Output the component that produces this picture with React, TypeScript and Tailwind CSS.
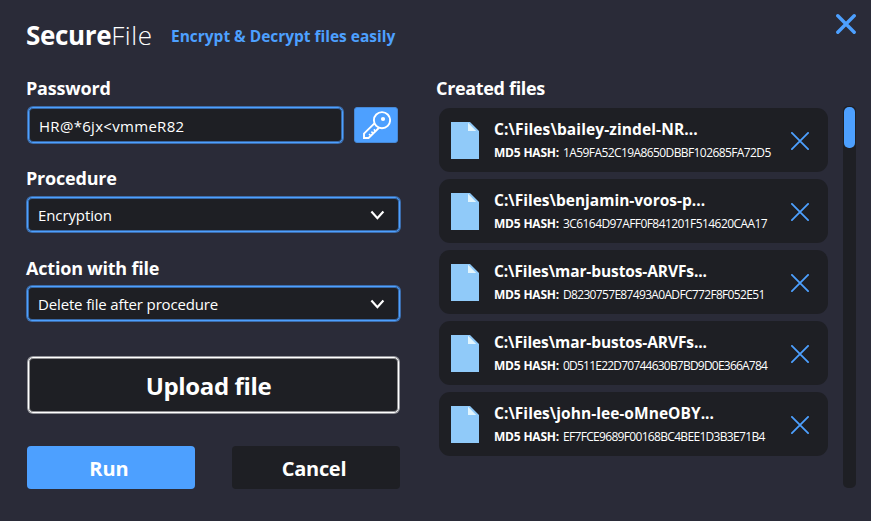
const files = [
  { name: "C:\\Files\\bailey-zindel-NR...", hash: "1A59FA52C19A8650DBBF102685FA72D5", nameTracking: "tracking-[0.11px]", hashTracking: "tracking-[-0.59px]" },
  { name: "C:\\Files\\benjamin-voros-p...", hash: "3C6164D97AFF0F841201F514620CAA17", nameTracking: "tracking-[0px]", hashTracking: "tracking-[-0.57px]" },
  { name: "C:\\Files\\mar-bustos-ARVFs...", hash: "D8230757E87493A0ADFC772F8F052E51", nameTracking: "tracking-[-0.1px]", hashTracking: "tracking-[-0.67px]" },
  { name: "C:\\Files\\mar-bustos-ARVFs...", hash: "0D511E22D70744630B7BD9D0E366A784", nameTracking: "tracking-[-0.1px]", hashTracking: "tracking-[-0.78px]" },
  { name: "C:\\Files\\john-lee-oMneOBY...", hash: "EF7FCE9689F00168BC4BEE1D3B3E71B4", nameTracking: "tracking-[0.04px]", hashTracking: "tracking-[-0.68px]" },
];

function Chevron() {
  return (
    <svg className="h-[12px] w-[16px]" viewBox="0 0 16 12" fill="none" stroke="#fff" strokeWidth="2.2">
      <path d="M2.4 2.6 8.4 9.2 14.4 2.6" />
    </svg>
  );
}

function KeyIcon() {
  return (
    <svg className="h-[30px] w-[30px]" viewBox="0 0 30 30" fill="none" stroke="#fff" strokeWidth="1.9">
      <circle cx="21" cy="10.2" r="8.1" />
      <circle cx="22" cy="9" r="2.1" fill="#fff" stroke="none" />
      <path d="M13.4 13.4 3 23.6V28h4.6L18 17.8" />
      <path d="M9.8 25.8 8 24M12.2 23.4 10.4 21.6M14.6 21.2 12.8 19.4" strokeWidth="1.5" />
    </svg>
  );
}

function FileIcon() {
  return (
    <svg className="h-[37px] w-[28px] shrink-0" viewBox="0 0 28 37">
      <path d="M0 0h19l9 9v28H0z" fill="#90caf9" />
      <path d="M17 0.8V9h8.2z" fill="#e1f5fe" />
    </svg>
  );
}

function Select({ value, tracking }: { value: string; tracking: string }) {
  return (
    <button className="ml-px flex h-[35px] w-[373px] items-center justify-between rounded-[5px] border border-[#4da0ff] bg-[#1e1f24] pr-[14px] pl-[10px] shadow-[0_0_0_1px_#3c6cab,inset_0_0_0_1px_#3868a5]">
      <span className={`pt-px text-[15px] leading-5 ${tracking}`}>{value}</span>
      <Chevron />
    </button>
  );
}

export default function App() {
  return (
    <main className="h-[521px] w-[871px] overflow-hidden bg-[#2a2b38] font-['Open_Sans','Noto_Sans',sans-serif] whitespace-nowrap text-white">
      <header className="flex h-[76px] items-start justify-between pt-[14px] pr-[15px] pl-[26px]">
        <div className="flex">
          <h1 className="w-[145px] pt-[2px] text-[26px] leading-[38px]">
            <span className="font-bold tracking-[-0.35px]">Secure</span>
            <span className="font-light tracking-[0.55px]">File</span>
          </h1>
          <p className="pt-[10px] text-[15.5px] leading-6 font-bold tracking-[-0.02px] text-[#4da0ff]">Encrypt &amp; Decrypt files easily</p>
        </div>
        <svg className="h-5 w-5" viewBox="0 0 20 20" stroke="#4da0ff" strokeWidth="3.4" strokeLinecap="round">
          <path d="M1.8 1.8 18.2 18.2M18.2 1.8 1.8 18.2" />
        </svg>
      </header>
      <div className="flex pl-[26px]">
        <section className="w-[410px]">
          <label className="block h-[31px] text-[18px] leading-6 font-bold tracking-[-0.2px]">Password</label>
          <div className="flex h-[59px] gap-[11px] pl-[2px]">
            <div className="flex h-[36px] w-[315px] items-center rounded-[5px] border border-[#4da0ff] bg-[#1e1f24] px-[10px] shadow-[0_0_0_1px_#3c6cab,inset_0_0_0_1px_#3868a5]">
              <span className="pt-[2px] text-[15px] leading-5 tracking-[0.3px]">HR@*6jx&lt;vmmeR82</span>
            </div>
            <button className="flex h-[36px] w-[44px] items-center justify-center rounded-[3px] border border-[#4689d8] bg-[#4da0ff]">
              <KeyIcon />
            </button>
          </div>
          <label className="block h-[31px] text-[18px] leading-6 font-bold tracking-[-0.2px]">Procedure</label>
          <Select value="Encryption" tracking="tracking-[-0.1px]" />
          <label className="mt-[24px] block h-[30px] text-[18px] leading-6 font-bold tracking-[-0.2px]">Action with file</label>
          <Select value="Delete file after procedure" tracking="tracking-[-0.15px]" />
          <button className="mt-[36px] ml-[2px] flex h-[56px] w-[371px] items-center justify-center rounded-[5px] border border-white bg-[#1e1f24] pt-[2px] pr-[10px] text-[24px] leading-8 font-bold tracking-[-0.35px] shadow-[0_0_0_1px_#94959b,inset_0_0_0_1px_#8f8f92]">Upload file</button>
          <div className="mt-[33px] flex gap-[37px] pl-px">
            <button className="h-[43px] w-[168px] rounded-[4px] bg-[#4da0ff] pt-px pr-1 text-[20px] leading-[43px] font-bold">Run</button>
            <button className="h-[43px] w-[168px] rounded-[4px] bg-[#1e1f24] pt-px pr-1 text-[20px] leading-[43px] font-bold tracking-[-0.3px]">Cancel</button>
          </div>
        </section>
        <section>
          <h2 className="h-[30px] text-[18px] leading-6 font-bold tracking-[-0.33px]">Created files</h2>
          <div className="flex gap-[15px] pl-[3px]">
            <div className="flex w-[389px] flex-col gap-[7px] pt-[2px]">
              {files.map((f, i) => (
                <article key={i} className="flex h-[64px] rounded-[11px] bg-[#1e1f24] pt-[14px] pl-[12px]">
                  <FileIcon />
                  <div className="-mt-[4px] ml-[15px] w-[297px]">
                    <div className={`h-[25px] text-[15.5px] leading-[22px] font-bold ${f.nameTracking}`}>{f.name}</div>
                    <div className="flex h-5 text-[12px] leading-5">
                      <span className="w-[69px] font-bold tracking-[-0.2px]">MD5 HASH:</span>
                      <span className={f.hashTracking}>{f.hash}</span>
                    </div>
                  </div>
                  <svg className="mt-[10px] h-[18px] w-[18px]" viewBox="0 0 18 18" stroke="#4da0ff" strokeWidth="1.8" strokeLinecap="round">
                    <path d="M.9.9 17.1 17.1M17.1.9.9 17.1" />
                  </svg>
                </article>
              ))}
            </div>
            <div className="h-[382px] w-[13px] rounded-[5px] bg-[#1e1f24] px-px pt-px">
              <div className="h-[41px] rounded-[5px] bg-[#4da0ff]" />
            </div>
          </div>
        </section>
      </div>
    </main>
  );
}
